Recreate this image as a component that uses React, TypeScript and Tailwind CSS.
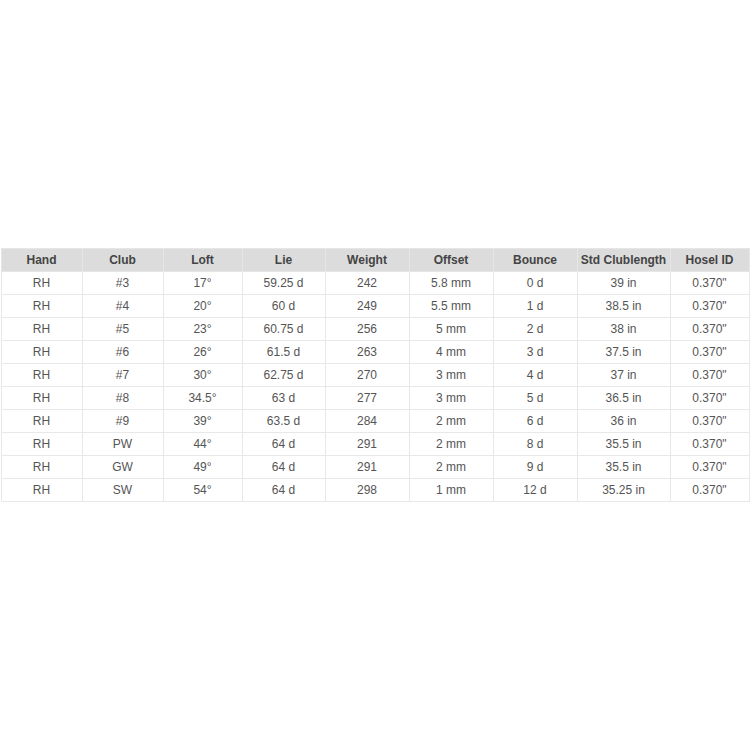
import React from "react";

const headers = ["Hand", "Club", "Loft", "Lie", "Weight", "Offset", "Bounce", "Std Clublength", "Hosel ID"];
const widths = [81, 81, 79, 83, 84, 84, 84, 93, 79];
const rows: string[][] = [
  ["RH", "#3", "17°", "59.25 d", "242", "5.8 mm", "0 d", "39 in", "0.370\""],
  ["RH", "#4", "20°", "60 d", "249", "5.5 mm", "1 d", "38.5 in", "0.370\""],
  ["RH", "#5", "23°", "60.75 d", "256", "5 mm", "2 d", "38 in", "0.370\""],
  ["RH", "#6", "26°", "61.5 d", "263", "4 mm", "3 d", "37.5 in", "0.370\""],
  ["RH", "#7", "30°", "62.75 d", "270", "3 mm", "4 d", "37 in", "0.370\""],
  ["RH", "#8", "34.5°", "63 d", "277", "3 mm", "5 d", "36.5 in", "0.370\""],
  ["RH", "#9", "39°", "63.5 d", "284", "2 mm", "6 d", "36 in", "0.370\""],
  ["RH", "PW", "44°", "64 d", "291", "2 mm", "8 d", "35.5 in", "0.370\""],
  ["RH", "GW", "49°", "64 d", "291", "2 mm", "9 d", "35.5 in", "0.370\""],
  ["RH", "SW", "54°", "64 d", "298", "1 mm", "12 d", "35.25 in", "0.370\""],
];

export default function App() {
  return (
    <div
      className="w-[750px] h-[750px] bg-white flex items-center justify-center"
      style={{ fontFamily: '"Liberation Sans", Arial, sans-serif' }}
    >
      <table className="table-fixed w-[748px] border-collapse text-[12px]">
        <colgroup>
          {widths.map((w, i) => (
            <col key={i} style={{ width: w }} />
          ))}
        </colgroup>
        <thead>
          <tr className="bg-[#dcdcdc] h-[23px]">
            {headers.map((h) => (
              <th
                key={h}
                className="border border-[#e6e6e6] text-center font-bold text-[#444444] p-0 leading-[22px]"
              >
                {h}
              </th>
            ))}
          </tr>
        </thead>
        <tbody>
          {rows.map((r, i) => (
            <tr key={i} className="h-[23px] bg-white">
              {r.map((c, j) => (
                <td
                  key={j}
                  className="border border-[#e8e8e8] text-center text-[#555555] p-0 leading-[22px]"
                >
                  {c}
                </td>
              ))}
            </tr>
          ))}
        </tbody>
      </table>
    </div>
  );
}
